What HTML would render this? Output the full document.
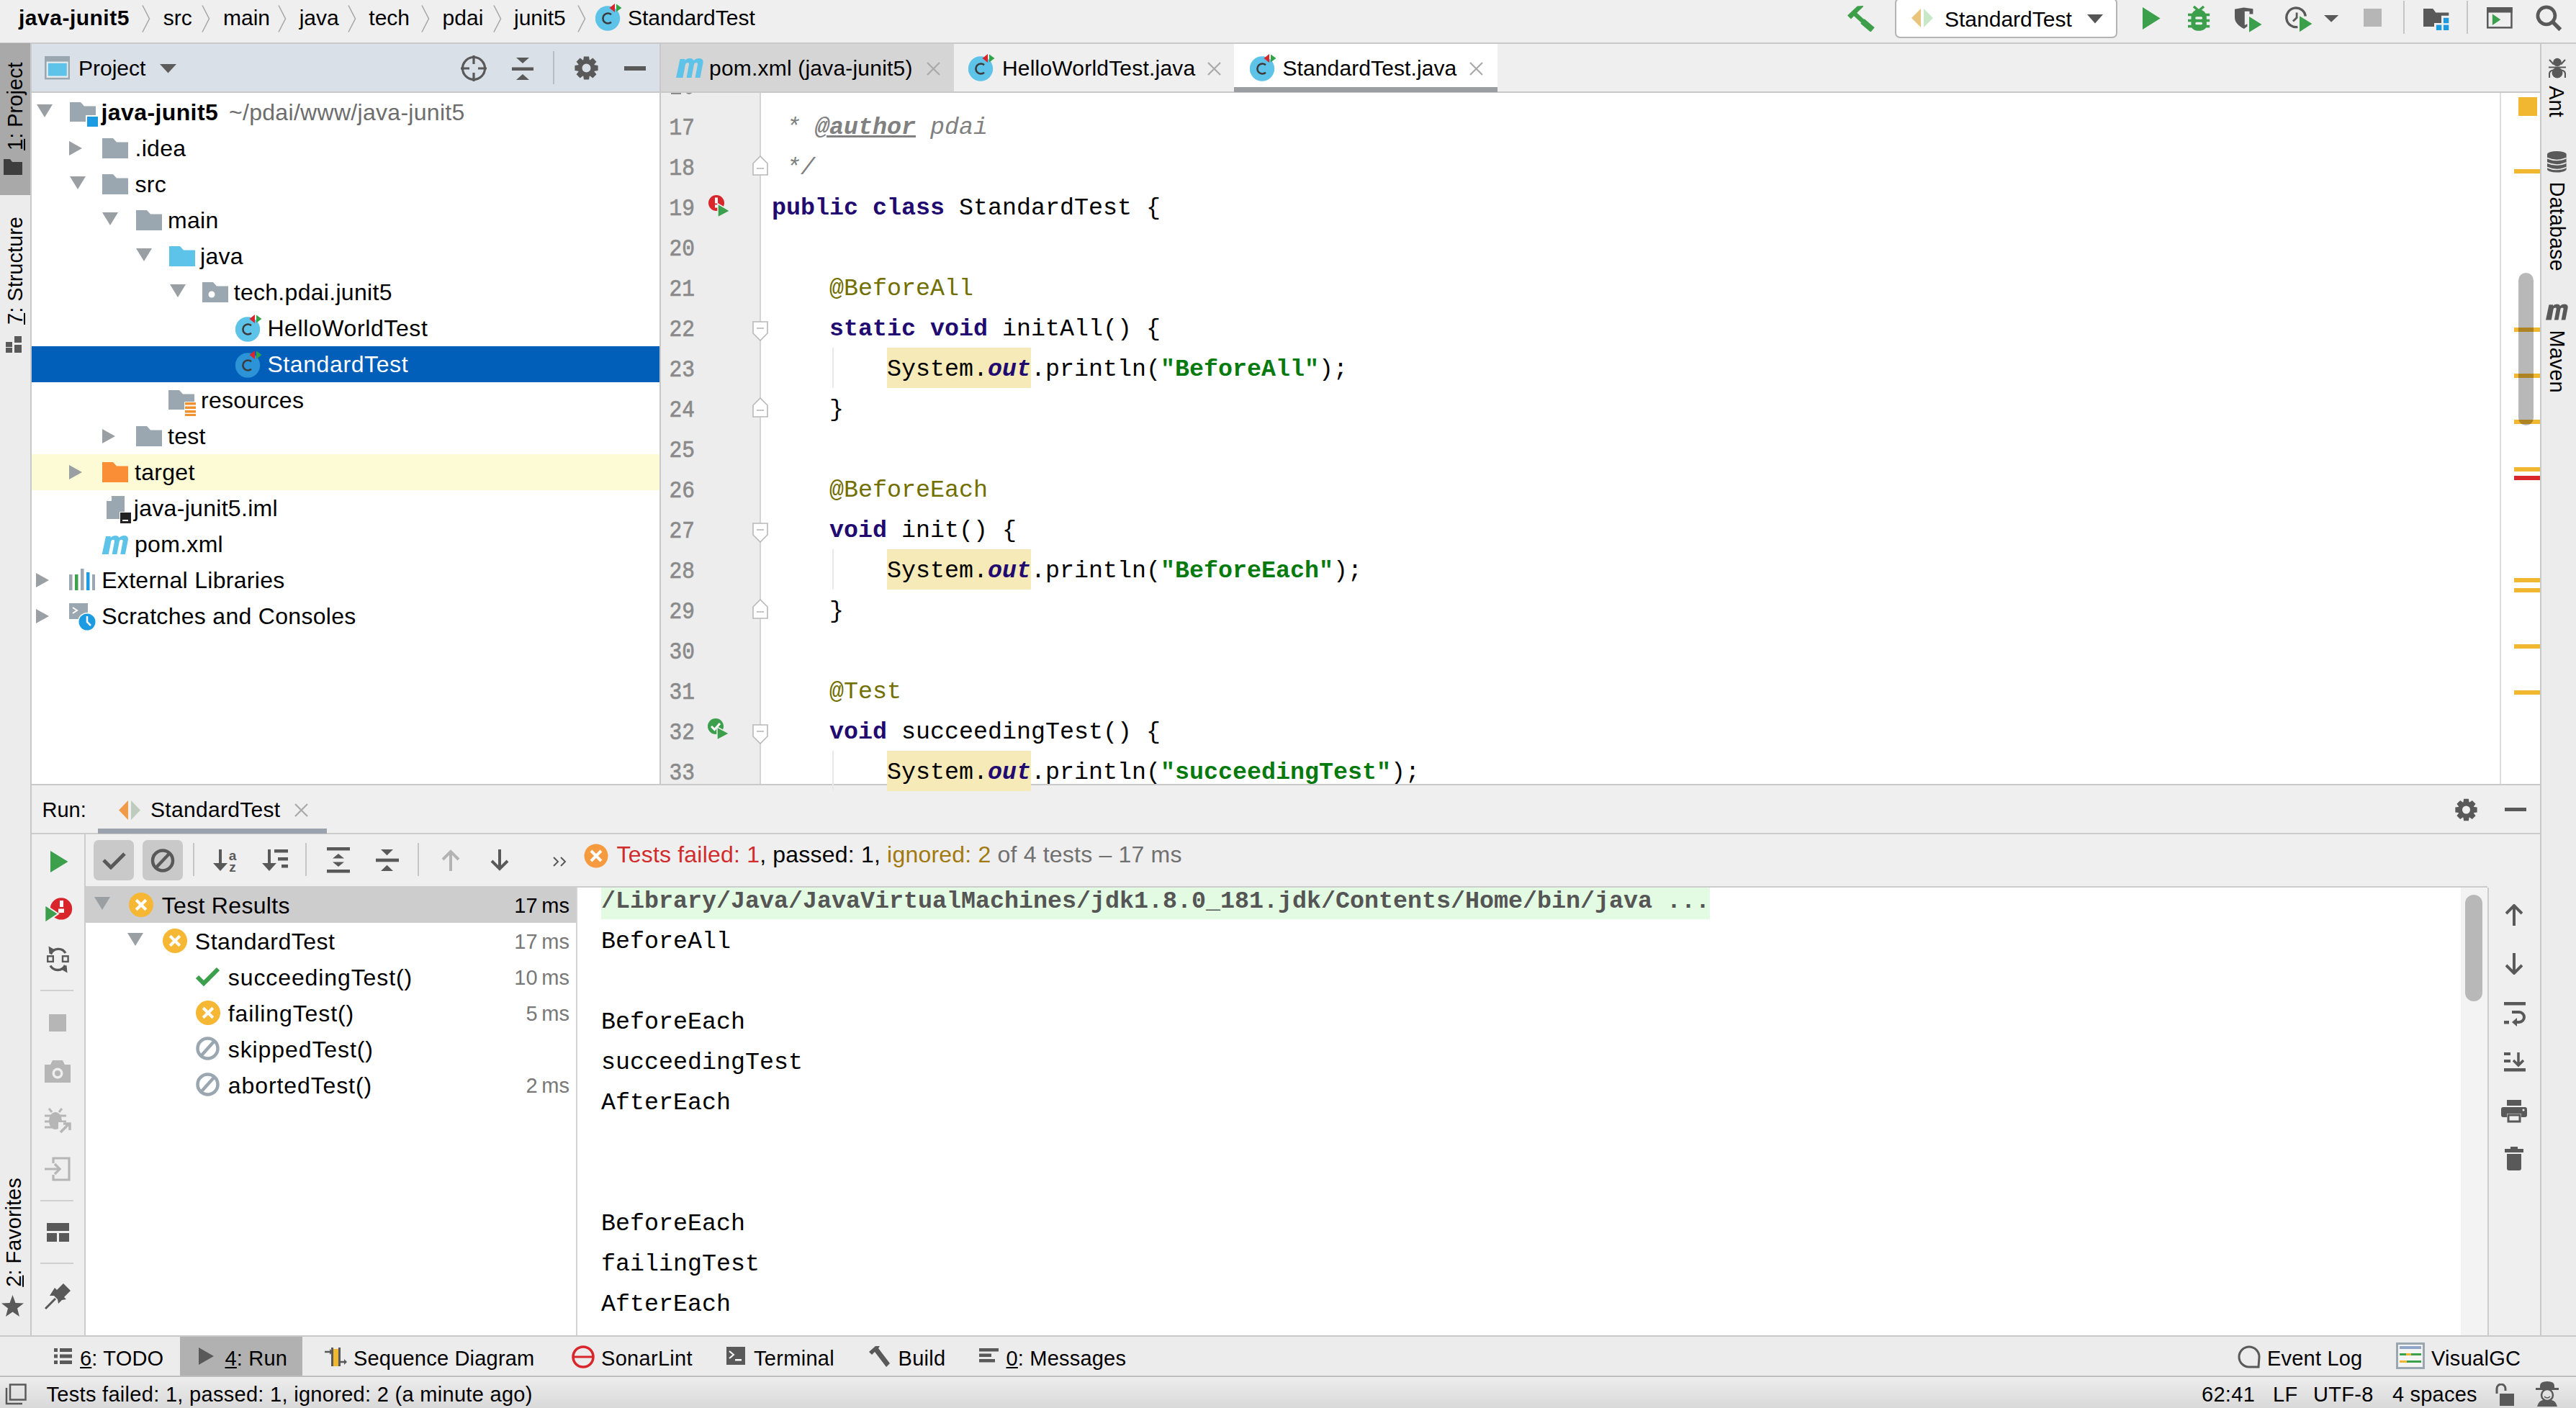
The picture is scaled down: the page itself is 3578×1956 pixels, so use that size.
<!DOCTYPE html><html><head><meta charset="utf-8"><style>html,body{margin:0;padding:0;}body{width:3578px;height:1956px;overflow:hidden;position:relative;background:#efefef;}body>div,body>svg{position:absolute;}</style></head><body><div style="left:0px;top:0px;width:3578px;height:59px;background:#efefef;"></div><div style="left:0px;top:59px;width:3578px;height:2px;background:#c9c9c9;"></div><div style="left:0px;top:61px;width:42px;height:1795px;background:#ececec;"></div><div style="left:42px;top:61px;width:2px;height:1795px;background:#c9c9c9;"></div><div style="left:3530px;top:61px;width:48px;height:1795px;background:#ececec;"></div><div style="left:3528px;top:61px;width:2px;height:1795px;background:#c9c9c9;"></div><div style="left:44px;top:61px;width:872px;height:66px;background:#dae0e7;"></div><div style="left:44px;top:127px;width:872px;height:2px;background:#c9c9c9;"></div><div style="left:44px;top:129px;width:872px;height:960px;background:#ffffff;"></div><div style="left:916px;top:61px;width:2px;height:1028px;background:#c9c9c9;"></div><div style="left:918px;top:61px;width:2610px;height:67px;background:#efefef;"></div><div style="left:918px;top:127px;width:2610px;height:2px;background:#c9c9c9;"></div><div style="left:918px;top:129px;width:2610px;height:960px;background:#ffffff;"></div><div style="left:918px;top:129px;width:137px;height:960px;background:#ededed;"></div><div style="left:1055px;top:129px;width:2px;height:960px;background:#d4d4d4;"></div><div style="left:3472px;top:129px;width:2px;height:960px;background:#dedede;"></div><div style="left:44px;top:1089px;width:3484px;height:2px;background:#c9c9c9;"></div><div style="left:44px;top:1091px;width:3484px;height:765px;background:#efefef;"></div><div style="left:44px;top:1157px;width:3484px;height:2px;background:#cccccc;"></div><div style="left:117px;top:1159px;width:2px;height:697px;background:#cccccc;"></div><div style="left:119px;top:1231px;width:3336px;height:2px;background:#cccccc;"></div><div style="left:119px;top:1233px;width:681px;height:623px;background:#ffffff;"></div><div style="left:800px;top:1233px;width:2px;height:623px;background:#d4d4d4;"></div><div style="left:802px;top:1233px;width:2616px;height:623px;background:#ffffff;"></div><div style="left:3418px;top:1233px;width:37px;height:623px;background:#f3f3f3;"></div><div style="left:3455px;top:1233px;width:2px;height:623px;background:#cccccc;"></div><div style="left:0px;top:1855px;width:3578px;height:2px;background:#c9c9c9;"></div><div style="left:0px;top:1857px;width:3578px;height:54px;background:#ececec;"></div><div style="left:0px;top:1911px;width:3578px;height:2px;background:#bfc0bd;"></div><div style="left:0px;top:1913px;width:3578px;height:43px;background:#e9e9e9;background:linear-gradient(#ededed,#d9d9d9);"></div><div style="left:26px;top:9.60px;font:bold 30px/30px 'Liberation Sans',sans-serif;color:#000;white-space:pre;letter-spacing:0.5px;">java-junit5</div><div style="left:226.7px;top:9.60px;font:normal 30px/30px 'Liberation Sans',sans-serif;color:#000;white-space:pre;">src</div><div style="left:310px;top:9.60px;font:normal 30px/30px 'Liberation Sans',sans-serif;color:#000;white-space:pre;">main</div><div style="left:415.7px;top:9.60px;font:normal 30px/30px 'Liberation Sans',sans-serif;color:#000;white-space:pre;">java</div><div style="left:512.3px;top:9.60px;font:normal 30px/30px 'Liberation Sans',sans-serif;color:#000;white-space:pre;">tech</div><div style="left:614.6px;top:9.60px;font:normal 30px/30px 'Liberation Sans',sans-serif;color:#000;white-space:pre;">pdai</div><div style="left:714px;top:9.60px;font:normal 30px/30px 'Liberation Sans',sans-serif;color:#000;white-space:pre;">junit5</div><svg style="left:197px;top:7px;" width="12" height="38" viewBox="0 0 12 38"><path d="M1,0.5 L10.5,19 L1,37.5" fill="none" stroke="#a8a8a8" stroke-width="1.6"/></svg><svg style="left:280.4px;top:7px;" width="12" height="38" viewBox="0 0 12 38"><path d="M1,0.5 L10.5,19 L1,37.5" fill="none" stroke="#a8a8a8" stroke-width="1.6"/></svg><svg style="left:385.8px;top:7px;" width="12" height="38" viewBox="0 0 12 38"><path d="M1,0.5 L10.5,19 L1,37.5" fill="none" stroke="#a8a8a8" stroke-width="1.6"/></svg><svg style="left:483.3px;top:7px;" width="12" height="38" viewBox="0 0 12 38"><path d="M1,0.5 L10.5,19 L1,37.5" fill="none" stroke="#a8a8a8" stroke-width="1.6"/></svg><svg style="left:584.7px;top:7px;" width="12" height="38" viewBox="0 0 12 38"><path d="M1,0.5 L10.5,19 L1,37.5" fill="none" stroke="#a8a8a8" stroke-width="1.6"/></svg><svg style="left:685px;top:7px;" width="12" height="38" viewBox="0 0 12 38"><path d="M1,0.5 L10.5,19 L1,37.5" fill="none" stroke="#a8a8a8" stroke-width="1.6"/></svg><svg style="left:801.5px;top:7px;" width="12" height="38" viewBox="0 0 12 38"><path d="M1,0.5 L10.5,19 L1,37.5" fill="none" stroke="#a8a8a8" stroke-width="1.6"/></svg><svg style="left:826.5px;top:3.5px;" width="38" height="39" viewBox="0 0 38 39"><circle cx="17" cy="21.5" r="17.2" fill="#5ec3e8"/><path d="M22,16.2 A7,7 0 1 0 22,26.8" fill="none" stroke="#3b3b3b" stroke-width="2.6"/><path d="M19.5,7 L27,1 L27,13 Z" fill="#d9262b"/><path d="M29,1.5 L36.5,7 L29,12.6 Z" fill="#33a34a"/></svg><div style="left:872px;top:9.60px;font:normal 30px/30px 'Liberation Sans',sans-serif;color:#000;white-space:pre;">StandardTest</div><svg style="left:2566px;top:7.7px;" width="40" height="36" viewBox="0 0 40 36"><path d="M0,13.4 L13.75,0.4 L22.1,0.1 L21.8,1.6 L15.3,7.8 L5,18.4 Z" fill="#3d9f4a"/><path d="M10.5,11.5 L33,32" stroke="#3d9f4a" stroke-width="6"/><path d="M21,21.5 L35,33.5" stroke="#3d9f4a" stroke-width="8.4"/></svg><div style="left:2632px;top:-3px;width:305px;height:51.5px;border:2px solid #b4b4b4;border-radius:7px;background:#fff;"></div><svg style="left:2655px;top:12px;" width="30" height="26" viewBox="0 0 30 26"><path d="M13,0 L0,13 L13,26 Z" fill="#e8c47c"/><path d="M17,0 L30,13 L17,26 Z" fill="#c8e8c8"/></svg><div style="left:2701px;top:11.90px;font:normal 30px/30px 'Liberation Sans',sans-serif;color:#000;white-space:pre;">StandardTest</div><svg style="left:2899px;top:20px;" width="22" height="13" viewBox="0 0 22 13"><path d="M0,0 H22 L11,12.5 Z" fill="#555"/></svg><svg style="left:2976px;top:10px;" width="25" height="31" viewBox="0 0 25 31"><path d="M0,0 L24.6,15.5 L0,31 Z" fill="#3b9f4c"/></svg><svg style="left:3038.9px;top:7.6px;" width="31" height="36" viewBox="0 0 31 36"><path d="M8,1 L15,7 L22,1" fill="none" stroke="#3b9f4c" stroke-width="3.5"/><path d="M15,5 C9,5 4.5,10 4.5,16 V27 C4.5,32 9,34.8 15,34.8 C21,34.8 25.9,32 25.9,27 V16 C25.9,10 21,5 15,5 Z" fill="#3b9f4c"/><rect x="0" y="10.7" width="30.2" height="3.6" fill="#3b9f4c"/><rect x="0" y="18.75" width="30.2" height="3.6" fill="#3b9f4c"/><rect x="0" y="26.8" width="30.2" height="3.6" fill="#3b9f4c"/><rect x="10.3" y="15.2" width="9.7" height="3.5" rx="1.5" fill="#efefef"/><rect x="10.3" y="22.8" width="9.7" height="3.5" rx="1.5" fill="#efefef"/></svg><svg style="left:3104px;top:9.8px;" width="38" height="36" viewBox="0 0 38 36"><path d="M0,2.7 L12.5,0.4 L25.4,2.2 V9.4 H20.5 V5.8 H13.8 V25 L17.4,23.2 V26.8 L12.9,29.9 C5,26 0,21 0,14 Z" fill="#595959"/><path d="M20,13 L37.5,24 L20,34.8 Z" fill="#3b9f4c"/></svg><svg style="left:3174px;top:8.5px;" width="38" height="37" viewBox="0 0 38 37"><path d="M28.3,13.5 A13.3,13.3 0 1 0 17.4,28.4" fill="none" stroke="#595959" stroke-width="3.4"/><path d="M16.1,8.5 V15.6 L11,20.5" fill="none" stroke="#595959" stroke-width="2.8"/><path d="M20,13.2 L37.4,24 L20,35.3 Z" fill="#3b9f4c"/></svg><svg style="left:3227.8px;top:21px;" width="20.2" height="10" viewBox="0 0 20.2 10"><path d="M0,0 H20.2 L10.1,9.8 Z" fill="#595959"/></svg><div style="left:3283.4px;top:12.3px;width:25px;height:25px;background:#b6b6b6;"></div><div style="left:3338px;top:1.2px;width:2px;height:45.7px;background:#c6c6c6;"></div><svg style="left:3366.2px;top:12.3px;" width="36" height="30" viewBox="0 0 36 30"><path d="M0,0 H13.2 L17.3,5.4 H35.3 V9.8 H25 V20 H15 V25 H0 Z" fill="#595959"/><rect x="27.9" y="12.8" width="7.4" height="7.4" fill="#1b9bde"/><rect x="17.9" y="22.6" width="7.4" height="7.4" fill="#1b9bde"/><rect x="27.9" y="22.6" width="7.4" height="7.4" fill="#1b9bde"/></svg><div style="left:3426px;top:1.2px;width:2px;height:45.7px;background:#c6c6c6;"></div><svg style="left:3454px;top:10.2px;" width="36" height="30" viewBox="0 0 36 30"><rect x="1.25" y="1.25" width="33.2" height="27.1" fill="none" stroke="#595959" stroke-width="2.5"/><rect x="0" y="0" width="35.7" height="7.5" fill="#595959"/><path d="M7.9,9.5 L19.3,17.3 L7.9,25.1 Z" fill="#3b9f4c"/></svg><svg style="left:3522px;top:7px;" width="37" height="37" viewBox="0 0 37 37"><circle cx="14.9" cy="14.8" r="12" fill="none" stroke="#595959" stroke-width="4.7"/><path d="M23,22.9 L34.3,34.2" stroke="#595959" stroke-width="5.5"/></svg><div style="left:0px;top:60px;width:42px;height:211px;background:#a9a9a9;"></div><div style="left:-40px;top:137px;width:122px;height:22px;transform:rotate(-90deg);font:normal 29px/22px 'Liberation Sans',sans-serif;color:#000;white-space:pre;text-align:center;"><span style="text-decoration:underline;">1</span>: Project</div><svg style="left:5px;top:221px;" width="26" height="22" viewBox="0 0 26 22"><path d="M0,0 H9 L12,4 H26 V22 H0 Z" fill="#3e3e3e"/></svg><div style="left:-56px;top:365px;width:154px;height:22px;transform:rotate(-90deg);font:normal 29px/22px 'Liberation Sans',sans-serif;color:#000;white-space:pre;text-align:center;"><span style="text-decoration:underline;">7</span>: Structure</div><svg style="left:8px;top:467px;" width="22" height="23" viewBox="0 0 22 23"><rect x="0" y="8" width="9" height="7" fill="#595959"/><rect x="12" y="0" width="10" height="9" fill="#595959"/><rect x="0" y="16" width="9" height="7" fill="#595959"/><rect x="12" y="12" width="10" height="11" fill="#595959"/></svg><div style="left:-58px;top:1701px;width:154px;height:22px;transform:rotate(-90deg);font:normal 29px/22px 'Liberation Sans',sans-serif;color:#000;white-space:pre;text-align:center;"><span style="text-decoration:underline;">2</span>: Favorites</div><svg style="left:2px;top:1799px;" width="31" height="30" viewBox="0 0 31 30"><path d="M15.5,0 L19.5,11 L31,11.5 L22,18.5 L25,30 L15.5,23.5 L6,30 L9,18.5 L0,11.5 L11.5,11 Z" fill="#595959"/></svg><svg style="left:62.2px;top:78.1px;" width="35" height="33" viewBox="0 0 35 33"><rect x="0" y="0" width="35" height="32.4" fill="#9aa7b0"/><rect x="2.6" y="7.6" width="30" height="22.3" fill="#e8ecef"/><rect x="4.8" y="9.8" width="26" height="17.7" fill="#5ec3e8"/></svg><div style="left:109px;top:79.60px;font:normal 30px/30px 'Liberation Sans',sans-serif;color:#000;white-space:pre;">Project</div><svg style="left:222px;top:89px;" width="23" height="13" viewBox="0 0 23 13"><path d="M0,0 H23 L11.5,12.5 Z" fill="#5c5c5c"/></svg><svg style="left:640px;top:77px;" width="36" height="36" viewBox="0 0 36 36"><circle cx="18" cy="18" r="15.5" fill="none" stroke="#595959" stroke-width="3.2"/><path d="M18,0 V12 M18,24 V36 M0,18 H12 M24,18 H36" stroke="#595959" stroke-width="3.2"/></svg><svg style="left:711px;top:80px;" width="30" height="31" viewBox="0 0 30 31"><path d="M6,0 H24 L15,8 Z M6,31 H24 L15,23 Z" fill="#595959"/><rect x="0" y="13.5" width="30" height="4.5" fill="#595959"/></svg><div style="left:768px;top:71px;width:2px;height:46px;background:#b9bec4;"></div><svg style="left:798px;top:78px;" width="33" height="33" viewBox="0 0 33 33"><path d="M32.60,12.90 L32.60,20.10 L27.73,20.73 L27.43,21.45 L30.43,25.34 L25.34,30.43 L21.45,27.43 L20.73,27.73 L20.10,32.60 L12.90,32.60 L12.27,27.73 L11.55,27.43 L7.66,30.43 L2.57,25.34 L5.57,21.45 L5.27,20.73 L0.40,20.10 L0.40,12.90 L5.27,12.27 L5.57,11.55 L2.57,7.66 L7.66,2.57 L11.55,5.57 L12.27,5.27 L12.90,0.40 L20.10,0.40 L20.73,5.27 L21.45,5.57 L25.34,2.57 L30.43,7.66 L27.43,11.55 L27.73,12.27 Z M22.5,16.5 A6,6 0 1 0 10.5,16.5 A6,6 0 1 0 22.5,16.5 Z" fill="#595959" fill-rule="evenodd"/></svg><div style="left:867px;top:92px;width:30px;height:5.5px;background:#595959;"></div><div style="left:44px;top:481.2px;width:872px;height:50px;background:#015eb9;"></div><div style="left:44px;top:631.2px;width:872px;height:50px;background:#fdfbd6;"></div><svg style="left:50.7px;top:145.2px;" width="22" height="18" viewBox="0 0 22 18"><path d="M0,0 H22 L11,18 Z" fill="#9a9fa3"/></svg><svg style="left:96.5px;top:142.2px;" width="40" height="34" viewBox="0 0 40 34"><path d="M0,0 H15 L20,5.5 H36 V27 H0 Z" fill="#9aa7b0"/><rect x="24" y="20" width="15" height="15" fill="#1d9be2"/><rect x="22" y="18" width="2" height="17" fill="#fff"/><rect x="22" y="18" width="17" height="2" fill="#fff"/></svg><div style="left:140.5px;top:139.91px;font:bold 32px/32px 'Liberation Sans',sans-serif;color:#000;white-space:pre;letter-spacing:0.4px;">java-junit5</div><div style="left:318px;top:139.91px;font:normal 32px/32px 'Liberation Sans',sans-serif;color:#6d6d6d;white-space:pre;letter-spacing:0.3px;">~/pdai/www/java-junit5</div><svg style="left:96px;top:195.7px;" width="18" height="20" viewBox="0 0 18 20"><path d="M0,0 L18,10 L0,20 Z" fill="#9a9fa3"/></svg><svg style="left:142px;top:192.0px;" width="36" height="28" viewBox="0 0 36 28"><path d="M0,0 H15 L20,5.5 H36 V28 H0 Z" fill="#9aa7b0"/></svg><div style="left:187.5px;top:189.91px;font:normal 32px/32px 'Liberation Sans',sans-serif;color:#000;white-space:pre;letter-spacing:0.3px;">.idea</div><svg style="left:96.5px;top:245.2px;" width="22" height="18" viewBox="0 0 22 18"><path d="M0,0 H22 L11,18 Z" fill="#9a9fa3"/></svg><svg style="left:142px;top:242.0px;" width="36" height="28" viewBox="0 0 36 28"><path d="M0,0 H15 L20,5.5 H36 V28 H0 Z" fill="#9aa7b0"/></svg><div style="left:187.5px;top:239.91px;font:normal 32px/32px 'Liberation Sans',sans-serif;color:#000;white-space:pre;letter-spacing:0.3px;">src</div><svg style="left:142px;top:295.2px;" width="22" height="18" viewBox="0 0 22 18"><path d="M0,0 H22 L11,18 Z" fill="#9a9fa3"/></svg><svg style="left:188.5px;top:292.0px;" width="36" height="28" viewBox="0 0 36 28"><path d="M0,0 H15 L20,5.5 H36 V28 H0 Z" fill="#9aa7b0"/></svg><div style="left:233px;top:289.91px;font:normal 32px/32px 'Liberation Sans',sans-serif;color:#000;white-space:pre;letter-spacing:0.3px;">main</div><svg style="left:188.5px;top:345.2px;" width="22" height="18" viewBox="0 0 22 18"><path d="M0,0 H22 L11,18 Z" fill="#9a9fa3"/></svg><svg style="left:234.5px;top:342.0px;" width="36" height="28" viewBox="0 0 36 28"><path d="M0,0 H15 L20,5.5 H36 V28 H0 Z" fill="#5ec3e8"/></svg><div style="left:278px;top:339.91px;font:normal 32px/32px 'Liberation Sans',sans-serif;color:#000;white-space:pre;letter-spacing:0.3px;">java</div><svg style="left:235.5px;top:395.2px;" width="22" height="18" viewBox="0 0 22 18"><path d="M0,0 H22 L11,18 Z" fill="#9a9fa3"/></svg><svg style="left:280.5px;top:392.0px;" width="36" height="28" viewBox="0 0 36 28"><path d="M0,0 H15 L20,5.5 H36 V28 H0 Z" fill="#9aa7b0"/><circle cx="13" cy="17" r="4.5" fill="#fff"/></svg><div style="left:324.7px;top:389.91px;font:normal 32px/32px 'Liberation Sans',sans-serif;color:#000;white-space:pre;letter-spacing:0.3px;">tech.pdai.junit5</div><svg style="left:326.5px;top:435.7px;" width="38" height="39" viewBox="0 0 38 39"><circle cx="17" cy="21.5" r="17.2" fill="#5ec3e8"/><path d="M22,16.2 A7,7 0 1 0 22,26.8" fill="none" stroke="#3b3b3b" stroke-width="2.6"/><path d="M19.5,7 L27,1 L27,13 Z" fill="#d9262b"/><path d="M29,1.5 L36.5,7 L29,12.6 Z" fill="#33a34a"/></svg><div style="left:371.4px;top:439.91px;font:normal 32px/32px 'Liberation Sans',sans-serif;color:#000;white-space:pre;letter-spacing:0.6px;">HelloWorldTest</div><svg style="left:326.5px;top:485.7px;" width="38" height="39" viewBox="0 0 38 39"><circle cx="17" cy="21.5" r="17.2" fill="#2b93d6"/><path d="M22,16.2 A7,7 0 1 0 22,26.8" fill="none" stroke="#3b3b3b" stroke-width="2.6"/><path d="M19.5,7 L27,1 L27,13 Z" fill="#d9262b"/><path d="M29,1.5 L36.5,7 L29,12.6 Z" fill="#33a34a"/></svg><div style="left:371.4px;top:489.91px;font:normal 32px/32px 'Liberation Sans',sans-serif;color:#fff;white-space:pre;letter-spacing:0.6px;">StandardTest</div><svg style="left:234px;top:542.2px;" width="40" height="36" viewBox="0 0 40 36"><path d="M0,0 H15 L20,5.5 H36 V27 H0 Z" fill="#9aa7b0"/><rect x="22" y="16" width="16" height="20" fill="#fff"/><rect x="23" y="17" width="15" height="3.5" fill="#f0922f"/><rect x="23" y="22.5" width="15" height="3.5" fill="#f0922f"/><rect x="23" y="28" width="15" height="3.5" fill="#f0922f"/><rect x="23" y="33" width="15" height="3" fill="#f0922f"/></svg><div style="left:279px;top:539.91px;font:normal 32px/32px 'Liberation Sans',sans-serif;color:#000;white-space:pre;letter-spacing:0.3px;">resources</div><svg style="left:142px;top:595.7px;" width="18" height="20" viewBox="0 0 18 20"><path d="M0,0 L18,10 L0,20 Z" fill="#9a9fa3"/></svg><svg style="left:188.5px;top:592.0px;" width="36" height="28" viewBox="0 0 36 28"><path d="M0,0 H15 L20,5.5 H36 V28 H0 Z" fill="#9aa7b0"/></svg><div style="left:233px;top:589.91px;font:normal 32px/32px 'Liberation Sans',sans-serif;color:#000;white-space:pre;letter-spacing:0.3px;">test</div><svg style="left:96px;top:645.7px;" width="18" height="20" viewBox="0 0 18 20"><path d="M0,0 L18,10 L0,20 Z" fill="#9a9fa3"/></svg><svg style="left:142px;top:642.0px;" width="36" height="28" viewBox="0 0 36 28"><path d="M0,0 H15 L20,5.5 H36 V28 H0 Z" fill="#f98e36"/></svg><div style="left:187px;top:639.91px;font:normal 32px/32px 'Liberation Sans',sans-serif;color:#000;white-space:pre;letter-spacing:0.3px;">target</div><svg style="left:147.5px;top:689.2px;" width="34" height="38" viewBox="0 0 34 38"><path d="M7,0 H25 V32 H0 V7 Z" fill="#9aa7b0"/><path d="M0,7 H7 V0 Z" fill="#fff"/><rect x="18" y="22" width="16" height="16" fill="#fff"/><rect x="19" y="23" width="15" height="15" fill="#232323"/><rect x="22" y="33" width="8" height="2" fill="#fff"/></svg><div style="left:185.8px;top:689.91px;font:normal 32px/32px 'Liberation Sans',sans-serif;color:#000;white-space:pre;letter-spacing:0.3px;">java-junit5.iml</div><svg style="left:141px;top:743.7px;" width="38" height="26" viewBox="0 0 38 27"><path d="M0,27 L5.5,1 H12.5 L12.2,3 Q15,0 19.5,0 Q23,0 24.5,3 Q27.5,0 31.5,0 Q38.5,0 37.5,6.5 L33.5,27 H26.5 L30,8.5 Q30.5,6 28,6 Q25.5,6 25,8.5 L21.5,27 H14.5 L18,8.5 Q18.5,6 16,6 Q13.5,6 13,8.5 L9.5,27 Z" fill="#5ec3e8"/></svg><div style="left:187px;top:739.91px;font:normal 32px/32px 'Liberation Sans',sans-serif;color:#000;white-space:pre;letter-spacing:0.3px;">pom.xml</div><svg style="left:50px;top:795.7px;" width="18" height="20" viewBox="0 0 18 20"><path d="M0,0 L18,10 L0,20 Z" fill="#9a9fa3"/></svg><svg style="left:96px;top:790.2px;" width="36" height="31" viewBox="0 0 36 31"><rect x="0" y="8" width="4.5" height="22" fill="#9aa7b0"/><rect x="8" y="8" width="4.5" height="22" fill="#3aa24a"/><rect x="16" y="0" width="4.5" height="30" fill="#9aa7b0"/><rect x="24" y="5" width="4.5" height="25" fill="#1d9be2"/><rect x="32" y="8" width="4" height="22" fill="#9aa7b0"/></svg><div style="left:141.2px;top:789.91px;font:normal 32px/32px 'Liberation Sans',sans-serif;color:#000;white-space:pre;letter-spacing:0.3px;">External Libraries</div><svg style="left:50px;top:845.7px;" width="18" height="20" viewBox="0 0 18 20"><path d="M0,0 L18,10 L0,20 Z" fill="#9a9fa3"/></svg><svg style="left:96px;top:838.2px;" width="38" height="39" viewBox="0 0 38 39"><rect x="0" y="0" width="26" height="22" fill="#9aa7b0"/><path d="M5,6 L11,10 L5,14" fill="none" stroke="#fff" stroke-width="2"/><circle cx="25" cy="26" r="13" fill="#fff"/><circle cx="25" cy="26" r="11.5" fill="#1d9be2"/><path d="M25,18 V26 L30,31" fill="none" stroke="#fff" stroke-width="2.5"/></svg><div style="left:141.2px;top:839.91px;font:normal 32px/32px 'Liberation Sans',sans-serif;color:#000;white-space:pre;letter-spacing:0.3px;">Scratches and Consoles</div><div style="left:918px;top:61px;width:407px;height:66px;background:#d5d5d5;"></div><div style="left:1714px;top:61px;width:366px;height:60px;background:#ffffff;"></div><div style="left:1714px;top:121px;width:366px;height:7px;background:#9a9ea3;"></div><svg style="left:939px;top:81px;" width="38" height="27" viewBox="0 0 38 27"><path d="M0,27 L5.5,1 H12.5 L12.2,3 Q15,0 19.5,0 Q23,0 24.5,3 Q27.5,0 31.5,0 Q38.5,0 37.5,6.5 L33.5,27 H26.5 L30,8.5 Q30.5,6 28,6 Q25.5,6 25,8.5 L21.5,27 H14.5 L18,8.5 Q18.5,6 16,6 Q13.5,6 13,8.5 L9.5,27 Z" fill="#5ec3e8"/></svg><div style="left:985px;top:80.00px;font:normal 30px/30px 'Liberation Sans',sans-serif;color:#000;white-space:pre;letter-spacing:0.2px;">pom.xml (java-junit5)</div><svg style="left:1286.5px;top:86px;" width="19" height="19" viewBox="0 0 19 19"><path d="M1,1 L18,18 M18,1 L1,18" stroke="#a9a9a9" stroke-width="2.2"/></svg><svg style="left:1345px;top:73.5px;" width="38" height="39" viewBox="0 0 38 39"><circle cx="17" cy="21.5" r="17.2" fill="#5ec3e8"/><path d="M22,16.2 A7,7 0 1 0 22,26.8" fill="none" stroke="#3b3b3b" stroke-width="2.6"/><path d="M19.5,7 L27,1 L27,13 Z" fill="#d9262b"/><path d="M29,1.5 L36.5,7 L29,12.6 Z" fill="#33a34a"/></svg><div style="left:1392px;top:80.00px;font:normal 30px/30px 'Liberation Sans',sans-serif;color:#000;white-space:pre;letter-spacing:0.2px;">HelloWorldTest.java</div><svg style="left:1677px;top:86px;" width="19" height="19" viewBox="0 0 19 19"><path d="M1,1 L18,18 M18,1 L1,18" stroke="#a9a9a9" stroke-width="2.2"/></svg><svg style="left:1735.5px;top:73.5px;" width="38" height="39" viewBox="0 0 38 39"><circle cx="17" cy="21.5" r="17.2" fill="#5ec3e8"/><path d="M22,16.2 A7,7 0 1 0 22,26.8" fill="none" stroke="#3b3b3b" stroke-width="2.6"/><path d="M19.5,7 L27,1 L27,13 Z" fill="#d9262b"/><path d="M29,1.5 L36.5,7 L29,12.6 Z" fill="#33a34a"/></svg><div style="left:1781.5px;top:80.00px;font:normal 30px/30px 'Liberation Sans',sans-serif;color:#000;white-space:pre;letter-spacing:0.1px;">StandardTest.java</div><svg style="left:2041px;top:86px;" width="19" height="19" viewBox="0 0 19 19"><path d="M1,1 L18,18 M18,1 L1,18" stroke="#a9a9a9" stroke-width="2.2"/></svg><div style="left:932px;top:129px;width:14px;height:2.2px;background:#8a8a8a;"></div><div style="left:952px;top:126px;width:10px;height:5px;border-radius:0 0 5px 5px;background:#8a8a8a;clip-path:inset(3px 0 0 0);"></div><div style="right:2613px;top:165.40px;font:normal 29.5px/29.5px 'Liberation Mono',monospace;color:#8a8a8a;white-space:pre;transform:scaleY(1.1);transform-origin:0 22.6px;-webkit-text-stroke:0.6px #8a8a8a;">17</div><div style="right:2613px;top:221.40px;font:normal 29.5px/29.5px 'Liberation Mono',monospace;color:#8a8a8a;white-space:pre;transform:scaleY(1.1);transform-origin:0 22.6px;-webkit-text-stroke:0.6px #8a8a8a;">18</div><div style="right:2613px;top:277.40px;font:normal 29.5px/29.5px 'Liberation Mono',monospace;color:#8a8a8a;white-space:pre;transform:scaleY(1.1);transform-origin:0 22.6px;-webkit-text-stroke:0.6px #8a8a8a;">19</div><div style="right:2613px;top:333.40px;font:normal 29.5px/29.5px 'Liberation Mono',monospace;color:#8a8a8a;white-space:pre;transform:scaleY(1.1);transform-origin:0 22.6px;-webkit-text-stroke:0.6px #8a8a8a;">20</div><div style="right:2613px;top:389.40px;font:normal 29.5px/29.5px 'Liberation Mono',monospace;color:#8a8a8a;white-space:pre;transform:scaleY(1.1);transform-origin:0 22.6px;-webkit-text-stroke:0.6px #8a8a8a;">21</div><div style="right:2613px;top:445.40px;font:normal 29.5px/29.5px 'Liberation Mono',monospace;color:#8a8a8a;white-space:pre;transform:scaleY(1.1);transform-origin:0 22.6px;-webkit-text-stroke:0.6px #8a8a8a;">22</div><div style="right:2613px;top:501.40px;font:normal 29.5px/29.5px 'Liberation Mono',monospace;color:#8a8a8a;white-space:pre;transform:scaleY(1.1);transform-origin:0 22.6px;-webkit-text-stroke:0.6px #8a8a8a;">23</div><div style="right:2613px;top:557.40px;font:normal 29.5px/29.5px 'Liberation Mono',monospace;color:#8a8a8a;white-space:pre;transform:scaleY(1.1);transform-origin:0 22.6px;-webkit-text-stroke:0.6px #8a8a8a;">24</div><div style="right:2613px;top:613.40px;font:normal 29.5px/29.5px 'Liberation Mono',monospace;color:#8a8a8a;white-space:pre;transform:scaleY(1.1);transform-origin:0 22.6px;-webkit-text-stroke:0.6px #8a8a8a;">25</div><div style="right:2613px;top:669.40px;font:normal 29.5px/29.5px 'Liberation Mono',monospace;color:#8a8a8a;white-space:pre;transform:scaleY(1.1);transform-origin:0 22.6px;-webkit-text-stroke:0.6px #8a8a8a;">26</div><div style="right:2613px;top:725.40px;font:normal 29.5px/29.5px 'Liberation Mono',monospace;color:#8a8a8a;white-space:pre;transform:scaleY(1.1);transform-origin:0 22.6px;-webkit-text-stroke:0.6px #8a8a8a;">27</div><div style="right:2613px;top:781.40px;font:normal 29.5px/29.5px 'Liberation Mono',monospace;color:#8a8a8a;white-space:pre;transform:scaleY(1.1);transform-origin:0 22.6px;-webkit-text-stroke:0.6px #8a8a8a;">28</div><div style="right:2613px;top:837.40px;font:normal 29.5px/29.5px 'Liberation Mono',monospace;color:#8a8a8a;white-space:pre;transform:scaleY(1.1);transform-origin:0 22.6px;-webkit-text-stroke:0.6px #8a8a8a;">29</div><div style="right:2613px;top:893.40px;font:normal 29.5px/29.5px 'Liberation Mono',monospace;color:#8a8a8a;white-space:pre;transform:scaleY(1.1);transform-origin:0 22.6px;-webkit-text-stroke:0.6px #8a8a8a;">30</div><div style="right:2613px;top:949.40px;font:normal 29.5px/29.5px 'Liberation Mono',monospace;color:#8a8a8a;white-space:pre;transform:scaleY(1.1);transform-origin:0 22.6px;-webkit-text-stroke:0.6px #8a8a8a;">31</div><div style="right:2613px;top:1005.40px;font:normal 29.5px/29.5px 'Liberation Mono',monospace;color:#8a8a8a;white-space:pre;transform:scaleY(1.1);transform-origin:0 22.6px;-webkit-text-stroke:0.6px #8a8a8a;">32</div><div style="right:2613px;top:1061.40px;font:normal 29.5px/29.5px 'Liberation Mono',monospace;color:#8a8a8a;white-space:pre;transform:scaleY(1.1);transform-origin:0 22.6px;-webkit-text-stroke:0.6px #8a8a8a;">33</div><div style="left:1232px;top:483px;width:200px;height:56px;background:#f5eab8;"></div><div style="left:1156px;top:483px;width:2px;height:56px;background:#e8e8e8;"></div><div style="left:1232px;top:763px;width:200px;height:56px;background:#f5eab8;"></div><div style="left:1156px;top:763px;width:2px;height:56px;background:#e8e8e8;"></div><div style="left:1232px;top:1043px;width:200px;height:56px;background:#f5eab8;"></div><div style="left:1156px;top:1043px;width:2px;height:56px;background:#e8e8e8;"></div><div style="left:1072px;top:161.47px;font:normal 33.33px/33.33px 'Liberation Mono',monospace;color:#000;white-space:pre;"><span style="color:#808080;font-style:italic;"> * </span><span style="color:#808080;font-style:italic;font-weight:bold;text-decoration:underline;">@author</span><span style="color:#808080;font-style:italic;"> pdai</span></div><div style="left:1072px;top:217.47px;font:normal 33.33px/33.33px 'Liberation Mono',monospace;color:#000;white-space:pre;"><span style="color:#808080;font-style:italic;"> */</span></div><div style="left:1072px;top:273.47px;font:normal 33.33px/33.33px 'Liberation Mono',monospace;color:#000;white-space:pre;"><span style="color:#210a70;font-weight:bold;">public</span> <span style="color:#210a70;font-weight:bold;">class</span> StandardTest {</div><div style="left:1152px;top:385.47px;font:normal 33.33px/33.33px 'Liberation Mono',monospace;color:#000;white-space:pre;"><span style="color:#716f00;">@BeforeAll</span></div><div style="left:1152px;top:441.47px;font:normal 33.33px/33.33px 'Liberation Mono',monospace;color:#000;white-space:pre;"><span style="color:#210a70;font-weight:bold;">static</span> <span style="color:#210a70;font-weight:bold;">void</span> initAll() {</div><div style="left:1232px;top:497.47px;font:normal 33.33px/33.33px 'Liberation Mono',monospace;color:#000;white-space:pre;">System.<span style="color:#210a70;font-style:italic;font-weight:bold;">out</span>.println(<span style="color:#067a0e;font-weight:bold;">&quot;BeforeAll&quot;</span>);</div><div style="left:1152px;top:553.47px;font:normal 33.33px/33.33px 'Liberation Mono',monospace;color:#000;white-space:pre;">}</div><div style="left:1152px;top:665.47px;font:normal 33.33px/33.33px 'Liberation Mono',monospace;color:#000;white-space:pre;"><span style="color:#716f00;">@BeforeEach</span></div><div style="left:1152px;top:721.47px;font:normal 33.33px/33.33px 'Liberation Mono',monospace;color:#000;white-space:pre;"><span style="color:#210a70;font-weight:bold;">void</span> init() {</div><div style="left:1232px;top:777.47px;font:normal 33.33px/33.33px 'Liberation Mono',monospace;color:#000;white-space:pre;">System.<span style="color:#210a70;font-style:italic;font-weight:bold;">out</span>.println(<span style="color:#067a0e;font-weight:bold;">&quot;BeforeEach&quot;</span>);</div><div style="left:1152px;top:833.47px;font:normal 33.33px/33.33px 'Liberation Mono',monospace;color:#000;white-space:pre;">}</div><div style="left:1152px;top:945.47px;font:normal 33.33px/33.33px 'Liberation Mono',monospace;color:#000;white-space:pre;"><span style="color:#716f00;">@Test</span></div><div style="left:1152px;top:1001.47px;font:normal 33.33px/33.33px 'Liberation Mono',monospace;color:#000;white-space:pre;"><span style="color:#210a70;font-weight:bold;">void</span> succeedingTest() {</div><div style="left:1232px;top:1057.47px;font:normal 33.33px/33.33px 'Liberation Mono',monospace;color:#000;white-space:pre;">System.<span style="color:#210a70;font-style:italic;font-weight:bold;">out</span>.println(<span style="color:#067a0e;font-weight:bold;">&quot;succeedingTest&quot;</span>);</div><svg style="left:1045px;top:216px;" width="22" height="28" viewBox="0 0 22 28"><path d="M1,27 H21 V11 L11,1 L1,11 Z" fill="#fff" stroke="#b8b8b8" stroke-width="1.6"/><path d="M6,18 H16" stroke="#b8b8b8" stroke-width="1.6"/></svg><svg style="left:1045px;top:446px;" width="22" height="28" viewBox="0 0 22 28"><path d="M1,1 H21 V17 L11,27 L1,17 Z" fill="#fff" stroke="#b8b8b8" stroke-width="1.6"/><path d="M6,10 H16" stroke="#b8b8b8" stroke-width="1.6"/></svg><svg style="left:1045px;top:552px;" width="22" height="28" viewBox="0 0 22 28"><path d="M1,27 H21 V11 L11,1 L1,11 Z" fill="#fff" stroke="#b8b8b8" stroke-width="1.6"/><path d="M6,18 H16" stroke="#b8b8b8" stroke-width="1.6"/></svg><svg style="left:1045px;top:726px;" width="22" height="28" viewBox="0 0 22 28"><path d="M1,1 H21 V17 L11,27 L1,17 Z" fill="#fff" stroke="#b8b8b8" stroke-width="1.6"/><path d="M6,10 H16" stroke="#b8b8b8" stroke-width="1.6"/></svg><svg style="left:1045px;top:832px;" width="22" height="28" viewBox="0 0 22 28"><path d="M1,27 H21 V11 L11,1 L1,11 Z" fill="#fff" stroke="#b8b8b8" stroke-width="1.6"/><path d="M6,18 H16" stroke="#b8b8b8" stroke-width="1.6"/></svg><svg style="left:1045px;top:1006px;" width="22" height="28" viewBox="0 0 22 28"><path d="M1,1 H21 V17 L11,27 L1,17 Z" fill="#fff" stroke="#b8b8b8" stroke-width="1.6"/><path d="M6,10 H16" stroke="#b8b8b8" stroke-width="1.6"/></svg><svg style="left:984px;top:271px;" width="31" height="31" viewBox="0 0 31 31"><circle cx="11" cy="11" r="11" fill="#d9262b"/><rect x="9" y="3.5" width="4" height="8" fill="#fff"/><rect x="9" y="13.5" width="4" height="4" fill="#fff"/><path d="M13,12 L30,22 L13,31 Z" fill="#3b9f4c" stroke="#ededed" stroke-width="1.5"/></svg><svg style="left:983px;top:998px;" width="31" height="30" viewBox="0 0 31 30"><circle cx="11" cy="11" r="11" fill="#3b9f4c"/><path d="M5,11 L9.5,15.5 L17,7" fill="none" stroke="#fff" stroke-width="3"/><path d="M13,12 L30,21 L13,30 Z" fill="#3b9f4c" stroke="#ededed" stroke-width="1.5"/></svg><div style="left:3498px;top:135px;width:26px;height:25.5px;background:#f2b731;"></div><div style="left:3492px;top:234.5px;width:36px;height:6px;background:#f2b731;"></div><div style="left:3492px;top:455px;width:36px;height:6px;background:#f2b731;"></div><div style="left:3492px;top:518.5px;width:36px;height:6px;background:#f2b731;"></div><div style="left:3492px;top:582.5px;width:36px;height:6px;background:#f2b731;"></div><div style="left:3492px;top:649px;width:36px;height:6px;background:#f2b731;"></div><div style="left:3492px;top:803px;width:36px;height:6px;background:#f2b731;"></div><div style="left:3492px;top:817px;width:36px;height:6px;background:#f2b731;"></div><div style="left:3492px;top:895px;width:36px;height:6px;background:#f2b731;"></div><div style="left:3492px;top:959px;width:36px;height:6px;background:#f2b731;"></div><div style="left:3492px;top:661px;width:36px;height:6px;background:#d9262b;"></div><div style="left:3498px;top:379px;width:21px;height:212px;border-radius:10.5px;background:rgba(0,0,0,0.28);"></div><svg style="left:3540px;top:80px;" width="24" height="29" viewBox="0 0 24 29"><circle cx="12" cy="6.5" r="5.8" fill="#595959"/><circle cx="12" cy="21" r="7.5" fill="#595959"/><path d="M1,3 L7,9.5 M23,3 L17,9.5 M0,13.5 H24 M1,28 V23 Q1,18.5 6,17.5 M23,28 V23 Q23,18.5 18,17.5" fill="none" stroke="#595959" stroke-width="2.2"/></svg><div style="left:3529.2px;top:130.2px;width:43.5px;height:22px;transform:rotate(90deg);font:normal 29px/22px 'Liberation Sans',sans-serif;color:#000;white-space:pre;text-align:center;">Ant</div><svg style="left:3538.3px;top:209.7px;" width="27" height="30" viewBox="0 0 27 30"><ellipse cx="13.3" cy="25" rx="13.3" ry="4.5" fill="#595959"/><rect x="0" y="4.5" width="26.6" height="20.5" fill="#595959"/><ellipse cx="13.3" cy="4.5" rx="13.3" ry="4.5" fill="#595959"/><path d="M0,9.5 Q13.3,15.5 26.6,9.5 M0,16 Q13.3,22 26.6,16 M0,22.5 Q13.3,28.5 26.6,22.5" fill="none" stroke="#ececec" stroke-width="1.6"/></svg><div style="left:3490.5px;top:301.5px;width:121.0px;height:22px;transform:rotate(90deg);font:normal 29px/22px 'Liberation Sans',sans-serif;color:#000;white-space:pre;text-align:center;">Database</div><svg style="left:3536px;top:421px;" width="31" height="25" viewBox="0 0 38 27"><path d="M0,27 L5.5,1 H12.5 L12.2,3 Q15,0 19.5,0 Q23,0 24.5,3 Q27.5,0 31.5,0 Q38.5,0 37.5,6.5 L33.5,27 H26.5 L30,8.5 Q30.5,6 28,6 Q25.5,6 25,8.5 L21.5,27 H14.5 L18,8.5 Q18.5,6 16,6 Q13.5,6 13,8.5 L9.5,27 Z" fill="#595959"/></svg><div style="left:3509.5px;top:488.5px;width:83.0px;height:22px;transform:rotate(90deg);font:normal 29px/22px 'Liberation Sans',sans-serif;color:#000;white-space:pre;text-align:center;">Maven</div><div style="left:58.5px;top:1110.75px;font:normal 29px/29px 'Liberation Sans',sans-serif;color:#000;white-space:pre;">Run:</div><svg style="left:165px;top:1112px;" width="30" height="27" viewBox="0 0 30 27"><path d="M13,0 L0,13.5 L13,27 Z" fill="#f09b4a"/><path d="M17,0 L30,13.5 L17,27 Z" fill="#bfcbbf"/></svg><div style="left:209px;top:1109.90px;font:normal 30px/30px 'Liberation Sans',sans-serif;color:#000;white-space:pre;letter-spacing:0.3px;">StandardTest</div><svg style="left:408.5px;top:1116px;" width="19" height="19" viewBox="0 0 19 19"><path d="M1,1 L18,18 M18,1 L1,18" stroke="#a9a9a9" stroke-width="2.2"/></svg><div style="left:136px;top:1151px;width:318px;height:7px;background:#9aa3ad;"></div><svg style="left:3410px;top:1109px;" width="31" height="32" viewBox="0 0 31 32"><path d="M30.63,12.62 L30.63,19.38 L26.26,20.05 L25.98,20.75 L28.59,24.30 L23.80,29.09 L20.25,26.48 L19.55,26.76 L18.88,31.13 L12.12,31.13 L11.45,26.76 L10.75,26.48 L7.20,29.09 L2.41,24.30 L5.02,20.75 L4.74,20.05 L0.37,19.38 L0.37,12.62 L4.74,11.95 L5.02,11.25 L2.41,7.70 L7.20,2.91 L10.75,5.52 L11.45,5.24 L12.12,0.87 L18.88,0.87 L19.55,5.24 L20.25,5.52 L23.80,2.91 L28.59,7.70 L25.98,11.25 L26.26,11.95 Z M21.0,16 A5.5,5.5 0 1 0 10.0,16 A5.5,5.5 0 1 0 21.0,16 Z" fill="#595959" fill-rule="evenodd"/></svg><div style="left:3479px;top:1122px;width:30px;height:5px;background:#595959;"></div><svg style="left:70px;top:1182px;" width="25" height="30" viewBox="0 0 25 30"><path d="M0,0 L24.5,15 L0,30 Z" fill="#3b9f4c"/></svg><svg style="left:62px;top:1246px;" width="39" height="37" viewBox="0 0 39 37"><circle cx="23" cy="16.4" r="15.2" fill="#d9262b"/><rect x="21" y="5" width="5" height="9" fill="#fff"/><path d="M19,16.5 H27 V22 H19 Z" fill="#fff"/><path d="M0.3,11 L19,23.5 L0.3,36 Z" fill="#3b9f4c" stroke="#efefef" stroke-width="2"/></svg><svg style="left:64.9px;top:1313.6px;" width="31" height="38" viewBox="0 0 31 38"><path d="M5.5,11.5 A11.5,11.5 0 0 1 26,10" fill="none" stroke="#595959" stroke-width="3.4"/><path d="M2.5,0.5 L12,6 L3.5,11 Z" fill="#595959"/><path d="M25.5,27 A11.5,11.5 0 0 1 5,27.5" fill="none" stroke="#595959" stroke-width="3.4"/><path d="M28.5,37.5 L19,32 L27.5,27 Z" fill="#595959"/><rect x="1.2" y="14.3" width="7.6" height="7.6" fill="#efefef" stroke="#595959" stroke-width="2.4"/><rect x="22" y="14.3" width="7.6" height="7.6" fill="#efefef" stroke="#595959" stroke-width="2.4"/></svg><div style="left:56px;top:1375px;width:46px;height:2px;background:#d0d0d0;"></div><div style="left:68px;top:1409px;width:24px;height:24px;background:#b6b6b6;"></div><svg style="left:62px;top:1473px;" width="36" height="31" viewBox="0 0 36 31"><path d="M0,6 H8 L11,0 H25 L28,6 H36 V31 H0 Z" fill="#b6b6b6"/><circle cx="18" cy="18" r="7.5" fill="#efefef"/><circle cx="18" cy="18" r="4" fill="#b6b6b6"/></svg><svg style="left:62px;top:1538px;" width="37" height="37" viewBox="0 0 37 37"><ellipse cx="15" cy="19" rx="9" ry="12" fill="#b6b6b6"/><path d="M0,12 H30 M0,20 H30 M0,28 H30 M6,2 L10,7 M24,2 L20,7" stroke="#b6b6b6" stroke-width="3"/><path d="M19,21 H37 V37 H19 Z" fill="#efefef"/><path d="M22,35 L34,23 M26,23 H35 V32" fill="none" stroke="#b6b6b6" stroke-width="3.5"/></svg><svg style="left:62px;top:1607px;" width="36" height="34" viewBox="0 0 36 34"><path d="M12,9 V2 H34 V32 H12 V25" fill="none" stroke="#b6b6b6" stroke-width="3.2"/><path d="M0,17 H20 M14,10 L21,17 L14,24" fill="none" stroke="#b6b6b6" stroke-width="3.2"/></svg><div style="left:56px;top:1667px;width:46px;height:2px;background:#d0d0d0;"></div><svg style="left:64.5px;top:1699px;" width="31" height="26" viewBox="0 0 31 26"><rect x="0" y="0" width="31" height="11" fill="#595959"/><rect x="0" y="14" width="14" height="12" fill="#595959"/><rect x="17" y="14" width="14" height="12" fill="#595959"/></svg><div style="left:56px;top:1754px;width:46px;height:2px;background:#d0d0d0;"></div><svg style="left:62px;top:1783px;" width="36" height="36" viewBox="0 0 36 36"><path d="M14,6 L30,22 L24,23 L19,28 L18,22 L13,17 L7,17 Z" fill="#595959"/><path d="M16,10 L26,0 L36,10 L26,20 Z" fill="#595959"/><path d="M1,35 L15,21" stroke="#595959" stroke-width="3"/></svg><div style="left:130px;top:1167px;width:56px;height:56px;border-radius:7px;background:#c9c9c9;"></div><div style="left:198px;top:1167px;width:56px;height:56px;border-radius:7px;background:#c9c9c9;"></div><svg style="left:142px;top:1183px;" width="33" height="25" viewBox="0 0 33 25"><path d="M2,12 L12,22 L31,3" fill="none" stroke="#595959" stroke-width="5"/></svg><svg style="left:209px;top:1179px;" width="34" height="33" viewBox="0 0 34 33"><circle cx="17" cy="16.5" r="14" fill="none" stroke="#595959" stroke-width="4.5"/><path d="M8,26 L26,7" stroke="#595959" stroke-width="4.5"/></svg><div style="left:268px;top:1171px;width:2px;height:46px;background:#c6c6c6;"></div><svg style="left:296px;top:1180px;" width="36" height="31" viewBox="0 0 36 31"><path d="M10,0 V24" stroke="#595959" stroke-width="4"/><path d="M0,19 H20 L10,30 Z" fill="#595959"/><text x="27" y="14.5" font-family="Liberation Sans" font-weight="bold" font-size="19" fill="#595959" text-anchor="middle">a</text><text x="27" y="31" font-family="Liberation Sans" font-weight="bold" font-size="19" fill="#595959" text-anchor="middle">z</text></svg><svg style="left:364px;top:1180px;" width="36" height="31" viewBox="0 0 36 31"><path d="M10,0 V24" stroke="#595959" stroke-width="4"/><path d="M0,19 H20 L10,30 Z" fill="#595959"/><rect x="17" y="0" width="19" height="4.5" fill="#595959"/><rect x="22" y="11" width="14" height="4.5" fill="#595959"/><rect x="27" y="21" width="9" height="4.5" fill="#595959"/></svg><div style="left:424px;top:1171px;width:2px;height:46px;background:#c6c6c6;"></div><svg style="left:454px;top:1177px;" width="32" height="36" viewBox="0 0 32 36"><rect x="0" y="0" width="32" height="4.5" fill="#595959"/><rect x="0" y="31" width="32" height="4.5" fill="#595959"/><path d="M8,15.5 L16,9 L24,15.5 Z M8,20.5 L16,27 L24,20.5 Z" fill="#595959"/></svg><svg style="left:522px;top:1179.7px;" width="32" height="30" viewBox="0 0 32 30"><rect x="0" y="12.7" width="32" height="4.6" fill="#595959"/><path d="M7,0 H24 L15.5,8.3 Z M7,30 H24 L15.5,21.7 Z" fill="#595959"/></svg><div style="left:580px;top:1171px;width:2px;height:46px;background:#c6c6c6;"></div><svg style="left:613px;top:1179.7px;" width="26" height="30" viewBox="0 0 26 30"><path d="M13,3 V30 M2,14 L13,3 L24,14" fill="none" stroke="#b3b3b3" stroke-width="4"/></svg><svg style="left:681px;top:1179.7px;" width="26" height="30" viewBox="0 0 26 30"><path d="M13,0 V27 M2,16 L13,27 L24,16" fill="none" stroke="#595959" stroke-width="4"/></svg><svg style="left:768px;top:1190px;" width="21" height="14" viewBox="0 0 21 14"><path d="M1,1 L7,7 L1,13 M11,1 L17,7 L11,13" fill="none" stroke="#595959" stroke-width="2"/></svg><svg style="left:811px;top:1172px;" width="34" height="34" viewBox="0 0 34 34"><circle cx="17" cy="17" r="16.5" fill="#f59a3e"/><path d="M10,10 L24,24 M24,10 L10,24" stroke="#fff" stroke-width="4"/></svg><div style="left:856.5px;top:1170.91px;font:normal 32px/32px 'Liberation Sans',sans-serif;color:#d12b2b;white-space:pre;letter-spacing:0.2px;">Tests failed: 1</div><div style="left:1055.15625px;top:1170.91px;font:normal 32px/32px 'Liberation Sans',sans-serif;color:#000;white-space:pre;letter-spacing:0.2px;">, passed: 1, </div><div style="left:1232.084375px;top:1170.91px;font:normal 32px/32px 'Liberation Sans',sans-serif;color:#a2790f;white-space:pre;letter-spacing:0.2px;">ignored: 2</div><div style="left:1376.4125px;top:1170.91px;font:normal 32px/32px 'Liberation Sans',sans-serif;color:#707070;white-space:pre;letter-spacing:0.2px;"> of 4 tests – 17 ms</div><div style="left:119px;top:1232px;width:681px;height:50px;background:#cdcdcd;"></div><svg style="left:131px;top:1246px;" width="22" height="18" viewBox="0 0 22 18"><path d="M0,0 H22 L11,18 Z" fill="#9a9fa3"/></svg><svg style="left:179px;top:1240px;" width="34" height="34" viewBox="0 0 34 34"><circle cx="17.0" cy="17.0" r="17.0" fill="#f5b734"/><path d="M10.2,10.2 L23.799999999999997,23.799999999999997 M23.799999999999997,10.2 L10.2,23.799999999999997" stroke="#fff" stroke-width="4.1"/></svg><div style="left:224.8px;top:1241.91px;font:normal 32px/32px 'Liberation Sans',sans-serif;color:#000;white-space:pre;letter-spacing:0.3px;">Test Results</div><svg style="left:177px;top:1296px;" width="22" height="18" viewBox="0 0 22 18"><path d="M0,0 H22 L11,18 Z" fill="#9a9fa3"/></svg><svg style="left:226px;top:1290px;" width="34" height="34" viewBox="0 0 34 34"><circle cx="17.0" cy="17.0" r="17.0" fill="#f5b734"/><path d="M10.2,10.2 L23.799999999999997,23.799999999999997 M23.799999999999997,10.2 L10.2,23.799999999999997" stroke="#fff" stroke-width="4.1"/></svg><div style="left:270.8px;top:1291.91px;font:normal 32px/32px 'Liberation Sans',sans-serif;color:#000;white-space:pre;letter-spacing:0.5px;">StandardTest</div><svg style="left:272px;top:1343px;" width="33" height="27" viewBox="0 0 33 27"><path d="M2,14 L11,23 L31,3" fill="none" stroke="#3b9f4c" stroke-width="6"/></svg><div style="left:316.8px;top:1341.91px;font:normal 32px/32px 'Liberation Sans',sans-serif;color:#000;white-space:pre;letter-spacing:0.9px;">succeedingTest()</div><svg style="left:272px;top:1390px;" width="34" height="34" viewBox="0 0 34 34"><circle cx="17.0" cy="17.0" r="17.0" fill="#f5b734"/><path d="M10.2,10.2 L23.799999999999997,23.799999999999997 M23.799999999999997,10.2 L10.2,23.799999999999997" stroke="#fff" stroke-width="4.1"/></svg><div style="left:316.8px;top:1391.91px;font:normal 32px/32px 'Liberation Sans',sans-serif;color:#000;white-space:pre;letter-spacing:0.9px;">failingTest()</div><svg style="left:272px;top:1440px;" width="33" height="33" viewBox="0 0 33 33"><circle cx="16.5" cy="16.5" r="14" fill="none" stroke="#9aa7b0" stroke-width="4.5"/><path d="M8,26 L25,7" stroke="#9aa7b0" stroke-width="4.5"/></svg><div style="left:316.8px;top:1441.91px;font:normal 32px/32px 'Liberation Sans',sans-serif;color:#000;white-space:pre;letter-spacing:0.9px;">skippedTest()</div><svg style="left:272px;top:1490px;" width="33" height="33" viewBox="0 0 33 33"><circle cx="16.5" cy="16.5" r="14" fill="none" stroke="#9aa7b0" stroke-width="4.5"/><path d="M8,26 L25,7" stroke="#9aa7b0" stroke-width="4.5"/></svg><div style="left:316.8px;top:1491.91px;font:normal 32px/32px 'Liberation Sans',sans-serif;color:#000;white-space:pre;letter-spacing:0.9px;">abortedTest()</div><div style="right:2787px;top:1244.45px;font:normal 29px/29px 'Liberation Sans',sans-serif;color:#000;white-space:pre;">17 ms</div><div style="right:2787px;top:1294.45px;font:normal 29px/29px 'Liberation Sans',sans-serif;color:#787878;white-space:pre;">17 ms</div><div style="right:2787px;top:1344.45px;font:normal 29px/29px 'Liberation Sans',sans-serif;color:#787878;white-space:pre;">10 ms</div><div style="right:2787px;top:1394.45px;font:normal 29px/29px 'Liberation Sans',sans-serif;color:#787878;white-space:pre;">5 ms</div><div style="right:2787px;top:1494.45px;font:normal 29px/29px 'Liberation Sans',sans-serif;color:#787878;white-space:pre;">2 ms</div><div style="left:835px;top:1233px;width:1540px;height:43.5px;background:#e3fae3;"></div><div style="left:835px;top:1236.07px;font:bold 33.33px/33.33px 'Liberation Mono',monospace;color:#555555;white-space:pre;">/Library/Java/JavaVirtualMachines/jdk1.8.0_181.jdk/Contents/Home/bin/java ...</div><div style="left:835px;top:1292.07px;font:normal 33.33px/33.33px 'Liberation Mono',monospace;color:#000;white-space:pre;">BeforeAll</div><div style="left:835px;top:1404.07px;font:normal 33.33px/33.33px 'Liberation Mono',monospace;color:#000;white-space:pre;">BeforeEach</div><div style="left:835px;top:1460.07px;font:normal 33.33px/33.33px 'Liberation Mono',monospace;color:#000;white-space:pre;">succeedingTest</div><div style="left:835px;top:1516.07px;font:normal 33.33px/33.33px 'Liberation Mono',monospace;color:#000;white-space:pre;">AfterEach</div><div style="left:835px;top:1684.07px;font:normal 33.33px/33.33px 'Liberation Mono',monospace;color:#000;white-space:pre;">BeforeEach</div><div style="left:835px;top:1740.07px;font:normal 33.33px/33.33px 'Liberation Mono',monospace;color:#000;white-space:pre;">failingTest</div><div style="left:835px;top:1796.07px;font:normal 33.33px/33.33px 'Liberation Mono',monospace;color:#000;white-space:pre;">AfterEach</div><div style="left:3424px;top:1243px;width:24px;height:148px;border-radius:12px;background:#b8b8b8;"></div><svg style="left:3480px;top:1256px;" width="24" height="30" viewBox="0 0 24 30"><path d="M12,3 V30 M1,13 L12,2 L23,13" fill="none" stroke="#595959" stroke-width="4"/></svg><svg style="left:3480px;top:1324px;" width="24" height="30" viewBox="0 0 24 30"><path d="M12,0 V27 M1,17 L12,28 L23,17" fill="none" stroke="#595959" stroke-width="4"/></svg><svg style="left:3477px;top:1392px;" width="31" height="35" viewBox="0 0 31 35"><rect x="1" y="0" width="30" height="4.5" fill="#595959"/><rect x="1" y="26" width="7" height="4.5" fill="#595959"/><path d="M12,14 H22 A6.5,6.5 0 0 1 22,28 H18" fill="none" stroke="#595959" stroke-width="4"/><path d="M12,28 L19,22 V34 Z" fill="#595959"/></svg><svg style="left:3477px;top:1462px;" width="31" height="27" viewBox="0 0 31 27"><rect x="1" y="0" width="9" height="4" fill="#595959"/><rect x="1" y="10" width="9" height="4" fill="#595959"/><rect x="1" y="22" width="30" height="4.5" fill="#595959"/><path d="M21,0 V17 M14,11 L21,18 L28,11" fill="none" stroke="#595959" stroke-width="3.5"/></svg><svg style="left:3474px;top:1528px;" width="36" height="32" viewBox="0 0 36 32"><rect x="8" y="0" width="20" height="8" fill="#595959"/><rect x="0" y="10" width="36" height="14" rx="3" fill="#595959"/><rect x="8" y="19" width="20" height="13" fill="#efefef"/><rect x="10" y="21" width="16" height="9" fill="none" stroke="#595959" stroke-width="3"/><circle cx="31" cy="14" r="1.5" fill="#efefef"/></svg><svg style="left:3479px;top:1593px;" width="26" height="33" viewBox="0 0 26 33"><rect x="0" y="3" width="26" height="5" fill="#595959"/><rect x="8" y="0" width="10" height="4" fill="#595959"/><path d="M3,10 H23 V30 Q23,33 20,33 H6 Q3,33 3,30 Z" fill="#595959"/></svg><div style="left:250px;top:1857px;width:170px;height:54px;background:#b1b1b1;"></div><svg style="left:75px;top:1873px;" width="25" height="22" viewBox="0 0 25 22"><rect x="0" y="0" width="5" height="5" fill="#595959"/><rect x="8" y="0" width="17" height="5" fill="#595959"/><rect x="0" y="8.5" width="5" height="5" fill="#595959"/><rect x="8" y="8.5" width="17" height="5" fill="#595959"/><rect x="0" y="17" width="5" height="5" fill="#595959"/><rect x="8" y="17" width="17" height="5" fill="#595959"/></svg><div style="left:111px;top:1873.25px;font:normal 29px/29px 'Liberation Sans',sans-serif;color:#000;white-space:pre;letter-spacing:0.2px;"><span style="text-decoration:underline;">6</span>: TODO</div><svg style="left:276px;top:1872px;" width="21" height="24" viewBox="0 0 21 24"><path d="M0,0 L21,12 L0,24 Z" fill="#595959"/></svg><div style="left:312.5px;top:1873.25px;font:normal 29px/29px 'Liberation Sans',sans-serif;color:#000;white-space:pre;letter-spacing:0.2px;"><span style="text-decoration:underline;">4</span>: Run</div><svg style="left:450.5px;top:1872px;" width="31" height="26" viewBox="0 0 31 26"><rect x="11" y="2" width="9" height="24" fill="#f2b731"/><rect x="9" y="0" width="3" height="26" fill="#595959"/><rect x="19" y="0" width="3" height="26" fill="#595959"/><path d="M0,6 H10 M22,20 H28" stroke="#595959" stroke-width="2.5"/><path d="M7,2 L11,6 L7,10 Z M27,16 L31,20 L27,24 Z" fill="#595959"/></svg><div style="left:491px;top:1873.25px;font:normal 29px/29px 'Liberation Sans',sans-serif;color:#000;white-space:pre;letter-spacing:0.2px;">Sequence Diagram</div><svg style="left:794px;top:1869px;" width="32" height="32" viewBox="0 0 32 32"><circle cx="16" cy="16" r="14" fill="none" stroke="#d9262b" stroke-width="3.5"/><path d="M2,16 H30" stroke="#d9262b" stroke-width="3"/></svg><div style="left:835px;top:1873.25px;font:normal 29px/29px 'Liberation Sans',sans-serif;color:#000;white-space:pre;letter-spacing:0.3px;">SonarLint</div><svg style="left:1009px;top:1871px;" width="26" height="25" viewBox="0 0 26 25"><rect x="0" y="0" width="26" height="25" fill="#595959"/><path d="M4,6 L10,11 L4,16" fill="none" stroke="#fff" stroke-width="2"/><rect x="12" y="17" width="9" height="2.5" fill="#fff"/></svg><div style="left:1047px;top:1873.25px;font:normal 29px/29px 'Liberation Sans',sans-serif;color:#000;white-space:pre;letter-spacing:0.3px;">Terminal</div><svg style="left:1206px;top:1870px;" width="30" height="29" viewBox="0 0 30 29"><path d="M1,8 L10,0 L16,0 L14,3 L30,24 L25,29 L9,8 L5,12 Z" fill="#595959"/></svg><div style="left:1247.5px;top:1873.25px;font:normal 29px/29px 'Liberation Sans',sans-serif;color:#000;white-space:pre;letter-spacing:0.3px;">Build</div><svg style="left:1360px;top:1873px;" width="27" height="20" viewBox="0 0 27 20"><rect x="0" y="0" width="27" height="4.5" fill="#595959"/><rect x="0" y="7.5" width="17" height="4.5" fill="#595959"/><rect x="0" y="15" width="22" height="4.5" fill="#595959"/></svg><div style="left:1397.5px;top:1873.25px;font:normal 29px/29px 'Liberation Sans',sans-serif;color:#000;white-space:pre;letter-spacing:0.2px;"><span style="text-decoration:underline;">0</span>: Messages</div><svg style="left:3108px;top:1869px;" width="32" height="32" viewBox="0 0 32 32"><path d="M29,30 H16 A14,14 0 1 1 30,16 Z" fill="none" stroke="#595959" stroke-width="3"/></svg><div style="left:3149px;top:1873.25px;font:normal 29px/29px 'Liberation Sans',sans-serif;color:#000;white-space:pre;letter-spacing:0.2px;">Event Log</div><svg style="left:3328px;top:1865px;" width="40" height="37" viewBox="0 0 40 37"><rect x="0" y="0" width="40" height="37" fill="#9aa7b0"/><rect x="3" y="3" width="34" height="31" fill="#f4f4f4"/><rect x="5" y="5" width="30" height="4" fill="#8fa6c8"/><rect x="5" y="15" width="30" height="3" fill="#3aa24a"/><rect x="14" y="15" width="7" height="3" fill="#f2b731"/><rect x="5" y="25" width="10" height="3" fill="#f2b731"/><rect x="15" y="25" width="20" height="3" fill="#3aa24a"/></svg><div style="left:3377px;top:1873.25px;font:normal 29px/29px 'Liberation Sans',sans-serif;color:#000;white-space:pre;letter-spacing:0.3px;">VisualGC</div><svg style="left:7px;top:1922px;" width="30" height="30" viewBox="0 0 30 30"><rect x="7" y="1.5" width="21.5" height="21" fill="none" stroke="#595959" stroke-width="2.5"/><path d="M2,6 V28 H24" fill="none" stroke="#595959" stroke-width="2.5"/></svg><div style="left:64.5px;top:1923.25px;font:normal 29px/29px 'Liberation Sans',sans-serif;color:#000;white-space:pre;letter-spacing:0.3px;">Tests failed: 1, passed: 1, ignored: 2 (a minute ago)</div><div style="left:3058px;top:1923.25px;font:normal 29px/29px 'Liberation Sans',sans-serif;color:#000;white-space:pre;letter-spacing:0.3px;">62:41</div><div style="left:3157px;top:1923.25px;font:normal 29px/29px 'Liberation Sans',sans-serif;color:#000;white-space:pre;letter-spacing:0.3px;">LF</div><div style="left:3213px;top:1923.25px;font:normal 29px/29px 'Liberation Sans',sans-serif;color:#000;white-space:pre;letter-spacing:0.3px;">UTF-8</div><div style="left:3323px;top:1923.25px;font:normal 29px/29px 'Liberation Sans',sans-serif;color:#000;white-space:pre;letter-spacing:0.2px;">4 spaces</div><svg style="left:3464px;top:1922px;" width="28" height="31" viewBox="0 0 28 31"><path d="M4,14 V7 A6,6 0 0 1 16,7 V10" fill="none" stroke="#595959" stroke-width="3"/><rect x="8" y="14" width="20" height="17" fill="#595959"/></svg><svg style="left:3522px;top:1919px;" width="32" height="35" viewBox="0 0 32 35"><path d="M6,10 H26 V6 Q26,0 16,0 Q6,0 6,6 Z" fill="#595959"/><rect x="0" y="9" width="32" height="3" fill="#595959"/><circle cx="16" cy="19" r="8" fill="none" stroke="#595959" stroke-width="2.5"/><path d="M12,21 Q16,25 20,21" fill="none" stroke="#595959" stroke-width="1.5"/><path d="M2,35 Q4,27 10,26 H22 Q28,27 30,35 Z" fill="#595959"/></svg></body></html>
